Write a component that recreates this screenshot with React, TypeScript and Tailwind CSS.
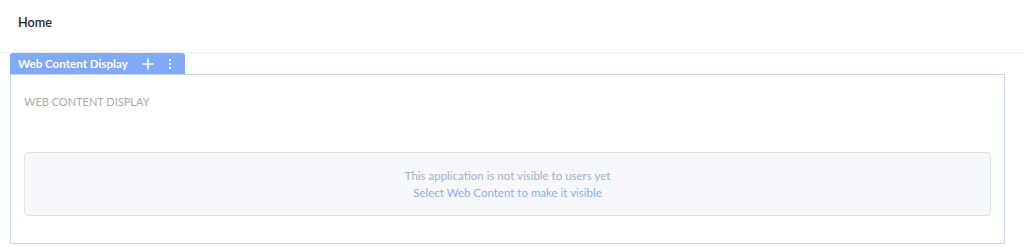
import React from "react";

export default function App() {
  return (
    <div className="w-[1024px] h-[247px] bg-white overflow-hidden" style={{ fontFamily: 'Lato, "Noto Sans", sans-serif' }}>
      <div className="h-[53px] flex items-center pl-[18px] pb-[6px] border-b border-[#eef0f3]">
        <span className="text-[12.7px] text-[#272833] font-semibold">Home</span>
      </div>
      <div className="pl-[10px] pr-[19px]">
        <div className="flex">
          <div className="h-[21px] w-[175px] bg-[#80a9f7] rounded-t-[3px] flex items-center pl-[8px] text-white text-[11.6px] font-bold">
            <span>Web Content Display</span>
            <svg className="ml-[14px]" width="12" height="12" viewBox="0 0 12 12">
              <path d="M6 0.5v11M0.5 6h11" stroke="white" strokeWidth="1.6" />
            </svg>
            <svg className="ml-[14px]" width="4" height="12" viewBox="0 0 4 12">
              <circle cx="2" cy="2" r="1.1" fill="white" />
              <circle cx="2" cy="6" r="1.1" fill="white" />
              <circle cx="2" cy="10" r="1.1" fill="white" />
            </svg>
          </div>
        </div>
        <div className="h-[170px] border-[1.5px] border-[#c9d7f3] px-[13px] pt-[19px]">
          <div className="text-[11px] text-[#a9aab3]">WEB CONTENT DISPLAY</div>
          <div className="mt-[41px] h-[64px] rounded-[4px] border border-[#dfe5ef] bg-[#f6f8fc] flex flex-col items-center justify-center text-[11.5px] leading-[17px]">
            <div className="text-[#a5b0c9]">This application is not visible to users yet</div>
            <div className="text-[#8bb0ec]">Select Web Content to make it visible</div>
          </div>
        </div>
      </div>
    </div>
  );
}
